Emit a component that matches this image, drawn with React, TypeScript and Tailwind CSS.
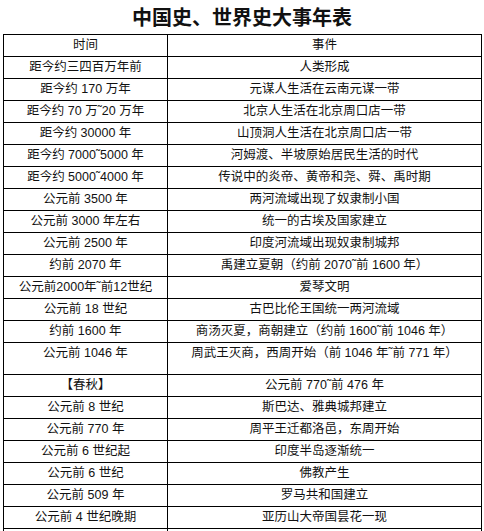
const rows: { time: string; event: string; tall?: boolean }[] = [
  { time: "距今约三四百万年前", event: "人类形成" },
  { time: "距今约 170 万年", event: "元谋人生活在云南元谋一带" },
  { time: "距今约 70 万˜20 万年", event: "北京人生活在北京周口店一带" },
  { time: "距今约 30000 年", event: "山顶洞人生活在北京周口店一带" },
  { time: "距今约 7000˜5000 年", event: "河姆渡、半坡原始居民生活的时代" },
  { time: "距今约 5000˜4000 年", event: "传说中的炎帝、黄帝和尧、舜、禹时期" },
  { time: "公元前 3500 年", event: "两河流域出现了奴隶制小国" },
  { time: "公元前 3000 年左右", event: "统一的古埃及国家建立" },
  { time: "公元前 2500 年", event: "印度河流域出现奴隶制城邦" },
  { time: "约前 2070 年", event: "禹建立夏朝（约前 2070˜前 1600 年）" },
  { time: "公元前2000年˜前12世纪", event: "爱琴文明" },
  { time: "公元前 18 世纪", event: "古巴比伦王国统一两河流域" },
  { time: "约前 1600 年", event: "商汤灭夏，商朝建立（约前 1600˜前 1046 年）" },
  { time: "公元前 1046 年", event: "周武王灭商，西周开始（前 1046 年˜前 771 年）", tall: true },
  { time: "【春秋】", event: "公元前 770˜前 476 年" },
  { time: "公元前 8 世纪", event: "斯巴达、雅典城邦建立" },
  { time: "公元前 770 年", event: "周平王迁都洛邑，东周开始" },
  { time: "公元前 6 世纪起", event: "印度半岛逐渐统一" },
  { time: "公元前 6 世纪", event: "佛教产生" },
  { time: "公元前 509 年", event: "罗马共和国建立" },
  { time: "公元前 4 世纪晚期", event: "亚历山大帝国昙花一现" },
  { time: "", event: "" },
];

function Row({ time, event, tall }: { time: string; event: string; tall?: boolean }) {
  return (
    <div className={`flex border-b border-black ${tall ? "h-[32px]" : "h-[22px]"}`}>
      <div className="w-[164px] shrink-0 border-r border-black">
        <div className="h-[21px] flex items-center justify-center whitespace-nowrap">{time}</div>
      </div>
      <div className="flex-1">
        <div className="h-[21px] flex items-center justify-center whitespace-nowrap">{event}</div>
      </div>
    </div>
  );
}

export default function App() {
  return (
    <div
      className="w-[484px] h-[531px] overflow-hidden bg-white text-[#111]"
      style={{ fontFamily: '"Liberation Sans", "Noto Sans CJK SC", sans-serif' }}
    >
      <div className="h-[34px] flex items-center justify-center pt-[2px]">
        <h1 className="text-[20px] font-bold leading-none">中国史、世界史大事年表</h1>
      </div>
      <div className="ml-[3px] w-[479px] border-x border-t border-black text-[12.5px] leading-none">
        <Row time="时间" event="事件" />
        {rows.map((r, i) => (
          <Row key={i} {...r} />
        ))}
      </div>
    </div>
  );
}
